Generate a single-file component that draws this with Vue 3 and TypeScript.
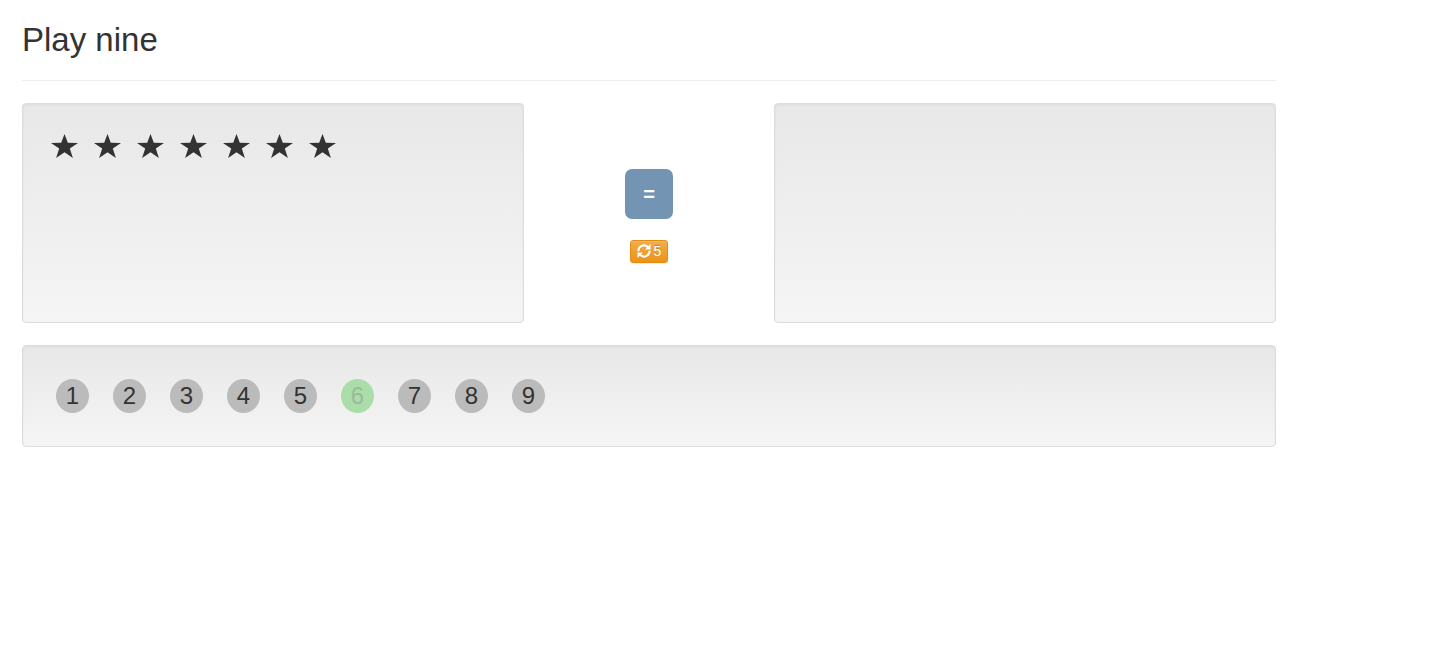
<script setup lang="ts">
import { ref } from 'vue'

const stars = ref<number>(7)
const redraws = ref<number>(5)
const selected = ref<number[]>([])
const used = ref<number[]>([6])
</script>

<template>
  <main class="game">
    <h1 class="title">Play nine</h1>
    <hr class="rule" />
    <div class="row">
      <section class="well stars" aria-label="Stars">
        <svg v-for="n in stars" :key="n" class="star" viewBox="0 0 27 24" aria-hidden="true">
          <path d="M13.5 0 16.8 8.7 27 8.9 18.8 14.4 21.9 24 13.5 18.2 5.1 24 8.2 14.4 0 8.9 10.2 8.7Z" />
        </svg>
      </section>
      <div class="controls">
        <button class="check" type="button" :disabled="selected.length === 0">=</button>
        <button class="redraw" type="button" aria-label="Redraw, 5 left">
          <svg class="refresh" viewBox="0 0 14 14" aria-hidden="true">
            <path class="arc" d="M1.4 7.2A5.5 5.5 0 0 1 10.9 3.2M12.6 6.8A5.5 5.5 0 0 1 3.1 10.8" />
            <path class="head" d="M13.5 0V5.4H8.1ZM.5 14V8.6H5.9Z" />
          </svg>
          <span>{{ redraws }}</span>
        </button>
      </div>
      <section class="well" aria-label="Answer"></section>
    </div>
    <section class="well numbers" aria-label="Numbers">
      <button
        v-for="n in 9"
        :key="n"
        type="button"
        class="number"
        :class="{ used: used.includes(n) }"
        :disabled="used.includes(n)"
      >{{ n }}</button>
    </section>
  </main>
</template>

<style>
body {
  background: #fff;
}
</style>

<style scoped>
.game {
  max-width: 1254px;
  margin: 0 22px;
  padding-top: 22px;
  color: #333;
  font-family: "Liberation Sans", Arial, sans-serif;
}
.title {
  margin: 0;
  font-size: 33px;
  font-weight: 400;
  line-height: 36px;
}
.rule {
  height: 1px;
  margin: 22px 0;
  border: 0;
  background: #eee;
}
.row {
  display: grid;
  grid-template-columns: 2fr 1fr 2fr;
  margin-bottom: 22px;
}
.well {
  box-sizing: border-box;
  min-height: 220px;
  border: 1px solid #dcdcdc;
  border-radius: 4px;
  background: linear-gradient(#e8e8e8, #f5f5f5);
  box-shadow: inset 0 1px 3px rgba(0, 0, 0, 0.05), 0 1px 0 rgba(255, 255, 255, 0.1);
}
.stars {
  display: flex;
  flex-wrap: wrap;
  align-content: flex-start;
  gap: 16px;
  padding: 30px 28px;
}
.star {
  width: 27px;
  height: 24px;
  fill: #333;
}
.controls {
  display: flex;
  flex-direction: column;
  align-items: center;
  padding-top: 66px;
  gap: 21px;
}
.check {
  min-width: 48px;
  height: 50px;
  padding: 0 17px;
  border: 0;
  border-radius: 7px;
  background: #7394b3;
  color: #fff;
  font: bold 20px/28px "Liberation Sans", Arial, sans-serif;
}
.redraw {
  display: flex;
  align-items: center;
  justify-content: center;
  gap: 3px;
  height: 23px;
  padding: 0 6px 1px;
  border: 1px solid #e38d13;
  border-radius: 3px;
  background: linear-gradient(#f0ad4e, #eb9316);
  box-shadow: inset 0 1px 0 rgba(255, 255, 255, 0.15), 0 1px 1px rgba(0, 0, 0, 0.075);
  color: #fff;
  font: 14px/20px "Liberation Sans", Arial, sans-serif;
  text-shadow: 0 -1px 0 rgba(0, 0, 0, 0.2);
}
.refresh {
  width: 14px;
  height: 14px;
}
.arc {
  fill: none;
  stroke: #fff;
  stroke-width: 2;
}
.head {
  fill: #fff;
}
.numbers {
  display: flex;
  flex-wrap: wrap;
  align-items: center;
  gap: 24px;
  min-height: 102px;
  padding: 33px;
}
.number {
  width: 33px;
  height: 34px;
  padding: 0;
  border: 0;
  border-radius: 50%;
  background: #bbb;
  color: #333;
  font: 24px/34px "Liberation Sans", Arial, sans-serif;
}
.number.used {
  background: #ada;
  color: #9b9;
}
</style>
